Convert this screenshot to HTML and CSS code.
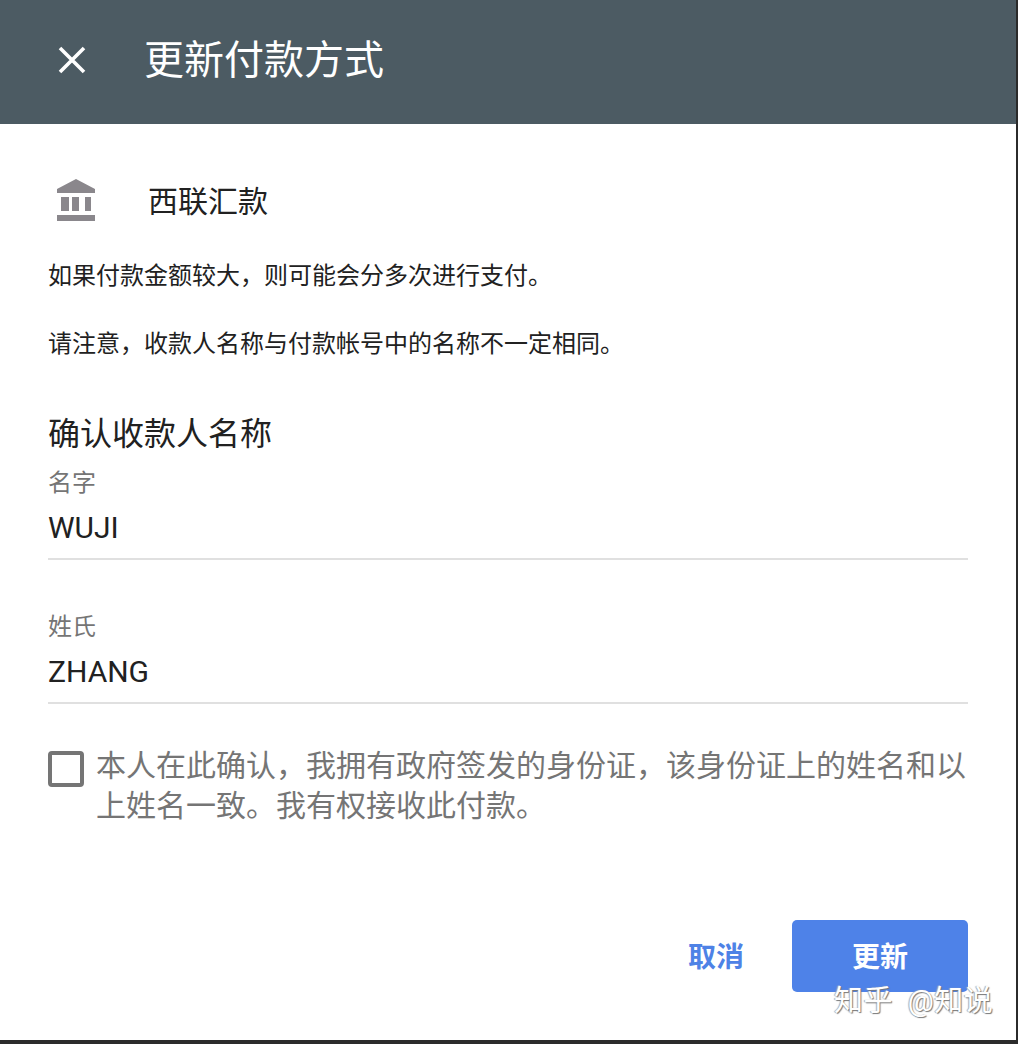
FILE: index.html
```html
<!DOCTYPE html>
<html lang="zh-CN">
<head>
<meta charset="utf-8">
<title>更新付款方式</title>
<link rel="stylesheet" href="styles.css">
</head>
<body>
<div class="dialog">
  <header class="topbar">
    <svg class="close" viewBox="0 0 28 28" aria-hidden="true"><path d="M2 2 L26 26 M26 2 L2 26"/></svg>
    <h1 class="title">更新付款方式</h1>
  </header>
  <main class="content">
    <div class="method">
      <svg class="bank" viewBox="0 0 38 42" aria-hidden="true"><path d="M19 0 L38 10 V14 H0 V10 Z M4 18 H12 V32 H4 Z M15 18 H22 V32 H15 Z M28 18 H34 V32 H28 Z M0 36 H38 V42 H0 Z"/></svg>
      <span class="method-name">西联汇款</span>
    </div>
    <p class="note first">如果付款金额较大，则可能会分多次进行支付。</p>
    <p class="note second">请注意，收款人名称与付款帐号中的名称不一定相同。</p>
    <h2 class="section">确认收款人名称</h2>
    <div class="field">
      <div class="label">名字</div>
      <div class="value">WUJI</div>
    </div>
    <div class="field">
      <div class="label">姓氏</div>
      <div class="value">ZHANG</div>
    </div>
    <div class="confirm">
      <span class="checkbox"></span>
      <span class="confirm-text">本人在此确认，我拥有政府签发的身份证，该身份证上的姓名和以上姓名一致。我有权接收此付款。</span>
    </div>
    <div class="actions">
      <span class="cancel">取消</span>
      <span class="update">更新</span>
    </div>
  </main>
  <div class="watermark">知乎 @知说</div>
</div>
</body>
</html>
```
FILE: styles.css
```css
* { box-sizing: border-box; }
html, body { margin: 0; padding: 0; }
body {
  width: 1018px;
  height: 1044px;
  background: #2b2b2b;
  font-family: Roboto, "Noto Sans CJK SC", sans-serif;
  overflow: hidden;
}
.dialog {
  position: relative;
  width: 1016px;
  height: 1040px;
  background: #fff;
}
.topbar {
  height: 124px;
  background: #4c5b63;
  display: flex;
  align-items: center;
  padding-left: 58px;
}
.close {
  width: 28px;
  height: 28px;
  margin-bottom: 4px;
  fill: none;
  stroke: #fff;
  stroke-width: 3.6;
}
.title {
  margin: 0 0 2px 58px;
  font-size: 40px;
  font-weight: 400;
  line-height: 48px;
  color: #fff;
}
.content { padding: 56px 48px 0 48px; width: 1016px; }
.method { display: flex; align-items: center; height: 42px; }
.bank { width: 38px; height: 42px; margin: -2px 0 0 9px; fill: #8a878c; }
.method-name {
  margin: 2px 0 0 53px;
  font-size: 30px;
  line-height: 42px;
  color: #212121;
}
.note {
  margin: 0;
  font-size: 24px;
  line-height: 34px;
  color: #212121;
}
.first { margin-top: 37px; }
.second { margin-top: 34px; }
.section {
  margin: 51px 0 0;
  font-size: 32px;
  font-weight: 400;
  line-height: 44px;
  color: #212121;
}
.field {
  width: 920px;
  height: 93px;
  border-bottom: 2px solid #e0e0e0;
  margin-bottom: 51px;
}
.section + .field { margin-top: 11px; }
.label { font-size: 24px; line-height: 32px; color: #757575; }
.value { font-size: 30px; line-height: 40px; color: #212121; margin-top: 9px; }
.confirm { display: flex; width: 920px; margin-top: -9px; }
.checkbox {
  flex: none;
  width: 36px;
  height: 36px;
  margin-top: 5px;
  border: 4px solid #757575;
  border-radius: 4px;
}
.confirm-text {
  margin-left: 12px;
  font-size: 30px;
  line-height: 40px;
  color: #757575;
}
.actions {
  width: 920px;
  margin-top: 94px;
  display: flex;
  justify-content: flex-end;
  align-items: center;
  font-size: 28px;
  font-weight: 700;
}
.cancel { color: #4e82e6; margin: 0 48px 2px 0; }
.update {
  width: 176px;
  height: 72px;
  padding-bottom: 3px;
  border-radius: 5px;
  background: #4e82e8;
  color: #fff;
  display: flex;
  align-items: center;
  justify-content: center;
}
.watermark {
  position: absolute;
  left: 834px;
  top: 982px;
  font-size: 29px;
  letter-spacing: 0.5px;
  word-spacing: 7px;
  line-height: 38px;
  white-space: nowrap;
  color: #fff;
  text-shadow: 1px 1px 1px #777, -1px 0 1px #aaa;
}
```
